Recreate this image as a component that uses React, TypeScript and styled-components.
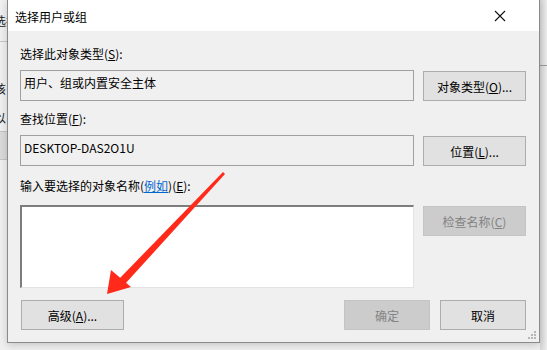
import styled, { createGlobalStyle } from 'styled-components';

const Global = createGlobalStyle`
  html, body {
    margin: 0;
    padding: 0;
    background: #f0f0f0;
  }
  body {
    font-family: "Microsoft YaHei UI", "Noto Sans CJK SC", "Noto Sans", sans-serif;
    font-size: 12px;
    color: #000;
  }
`;

const Desktop = styled.div`
  position: relative;
  width: 547px;
  height: 350px;
  overflow: hidden;
  background: #f0f0f0;
`;

const BackWindow = styled.div`
  display: flex;
  flex-direction: column;
  width: 547px;
  height: 350px;
  background: #f0f0f0;
`;

const BackStrip = styled.div`
  display: flex;
  flex-direction: column;
  margin-left: -6px;
  padding-top: 8px;
  font-size: 12px;
  color: #222;
`;

const BackLine = styled.div<{ $gap: number }>`
  margin-top: ${(p) => p.$gap}px;
  height: 16px;
  line-height: 16px;
`;

const BackRule = styled.div`
  height: 1px;
  margin-top: 12px;
  background: #c8c8c8;
`;

const BackButton = styled.div`
  margin-top: 5px;
  width: 40px;
  height: 27px;
  background: #dadada;
  border: 1px solid #c4c4c4;
`;

const BackRight = styled.div`
  position: absolute;
  right: 0;
  top: 0;
  width: 7px;
  height: 350px;
  background: linear-gradient(to right, #d6d6d6, #ececec);
`;

const BackRightRule = styled.div`
  margin-top: 65px;
  height: 1px;
  background: #9a9a9a;
`;

const Dialog = styled.div`
  position: absolute;
  left: 7px;
  top: -1px;
  width: 531px;
  height: 342px;
  display: flex;
  flex-direction: column;
  background: #f0f0f0;
  border: 1px solid #8a8a8a;
  box-shadow: 0 2px 8px rgba(0, 0, 0, 0.18);
`;

const TitleBar = styled.div`
  height: 31px;
  flex: none;
  display: flex;
  align-items: center;
  justify-content: space-between;
  background: #fff;
  padding: 0 0 0 7px;
`;

const Title = styled.div`
  font-size: 12px;
  padding-top: 1px;
`;

const CloseBox = styled.div`
  width: 46px;
  height: 31px;
  display: flex;
  align-items: center;
  justify-content: center;
  margin-right: 16px;
`;

const Body = styled.div`
  flex: 1;
  display: flex;
  flex-direction: column;
  padding: 15px 13px 0 12px;
`;

const Label = styled.div<{ $mb: number }>`
  height: 16px;
  line-height: 16px;
  margin-bottom: ${(p) => p.$mb}px;
`;

const Row = styled.div<{ $mb: number }>`
  display: flex;
  align-items: flex-start;
  gap: 9px;
  margin-bottom: ${(p) => p.$mb}px;
`;

const ReadBox = styled.div`
  box-sizing: border-box;
  width: 394px;
  height: 31px;
  border: 1px solid #a0a0a0;
  background: #f0f0f0;
  padding: 3px 3px;
  line-height: 18px;
  white-space: nowrap;
`;

const InputArea = styled.div`
  box-sizing: border-box;
  width: 394px;
  height: 83px;
  background: #fff;
  border-top: 2px solid #7d7d7d;
  border-left: 2px solid #7d7d7d;
  border-right: 1px solid #e3e3e3;
  border-bottom: 1px solid #e3e3e3;
`;

const Button = styled.div<{ $w?: number; $disabled?: boolean; $mt?: number }>`
  box-sizing: border-box;
  width: ${(p) => p.$w ?? 103}px;
  height: 30px;
  margin-top: ${(p) => p.$mt ?? 1}px;
  display: flex;
  align-items: center;
  justify-content: center;
  border: 1px solid ${(p) => (p.$disabled ? '#c4c4c4' : '#adadad')};
  background: ${(p) => (p.$disabled ? '#cccccc' : '#e1e1e1')};
  color: ${(p) => (p.$disabled ? '#838383' : '#000')};
  white-space: nowrap;
`;

const U = styled.span`
  text-decoration: underline;
  text-underline-offset: 1px;
`;

const Link = styled.span`
  color: #0066cc;
  text-decoration: underline;
  text-underline-offset: 1px;
`;

const Footer = styled.div`
  display: flex;
  align-items: center;
  margin-top: 12px;
  padding-left: 1px;
`;

const Spacer = styled.div`
  flex: 1;
`;

const FooterRight = styled.div`
  display: flex;
  gap: 10px;
`;

const Grip = styled.svg`
  position: absolute;
  right: 2px;
  bottom: 2px;
`;

const Arrow = styled.svg`
  position: absolute;
  left: 0;
  top: 0;
  pointer-events: none;
`;

const CloseIcon = () => (
  <svg width="12" height="12" viewBox="0 0 12 12">
    <path d="M1 1 L11 11 M11 1 L1 11" stroke="#111" strokeWidth="1.1" fill="none" />
  </svg>
);

export default function App() {
  return (
    <>
      <Global />
      <Desktop>
        <BackWindow>
          <BackStrip>
            <BackLine $gap={5}>选择</BackLine>
            <BackRule />
            <BackLine $gap={39}>该</BackLine>
            <BackLine $gap={13}>以</BackLine>
            <BackButton />
          </BackStrip>
        </BackWindow>
        <BackRight>
          <BackRightRule />
        </BackRight>

        <Dialog>
          <TitleBar>
            <Title>选择用户或组</Title>
            <CloseBox>
              <CloseIcon />
            </CloseBox>
          </TitleBar>
          <Body>
            <Label $mb={8}>
              选择此对象类型(<U>S</U>):
            </Label>
            <Row $mb={10}>
              <ReadBox>用户、组或内置安全主体</ReadBox>
              <Button>
                对象类型(<U>O</U>)...
              </Button>
            </Row>
            <Label $mb={8}>
              查找位置(<U>F</U>):
            </Label>
            <Row $mb={12}>
              <ReadBox>DESKTOP-DAS2O1U</ReadBox>
              <Button>
                位置(<U>L</U>)...
              </Button>
            </Row>
            <Label $mb={11}>
              输入要选择的对象名称(<Link>例如</Link>)(<U>E</U>):
            </Label>
            <Row $mb={0}>
              <InputArea />
              <Button $disabled>
                检查名称(<U>C</U>)
              </Button>
            </Row>
            <Footer>
              <Button $mt={0}>
                高级(<U>A</U>)...
              </Button>
              <Spacer />
              <FooterRight>
                <Button $w={86} $mt={0} $disabled>
                  确定
                </Button>
                <Button $w={86} $mt={0}>
                  取消
                </Button>
              </FooterRight>
            </Footer>
          </Body>
          <Grip width="10" height="10" viewBox="0 0 10 10">
            <rect x="7" y="1" width="2" height="2" fill="#b5b5b5" />
            <rect x="4" y="4" width="2" height="2" fill="#b5b5b5" />
            <rect x="7" y="4" width="2" height="2" fill="#b5b5b5" />
            <rect x="1" y="7" width="2" height="2" fill="#b5b5b5" />
            <rect x="4" y="7" width="2" height="2" fill="#b5b5b5" />
            <rect x="7" y="7" width="2" height="2" fill="#b5b5b5" />
          </Grip>
        </Dialog>

        <Arrow width="547" height="350" viewBox="0 0 547 350">
          <polygon points="223,172 225,174 125,284 119,279" fill="#ff2a1a" />
          <polygon points="107,294 111,270 131,287" fill="#ff2a1a" />
        </Arrow>
      </Desktop>
    </>
  );
}
